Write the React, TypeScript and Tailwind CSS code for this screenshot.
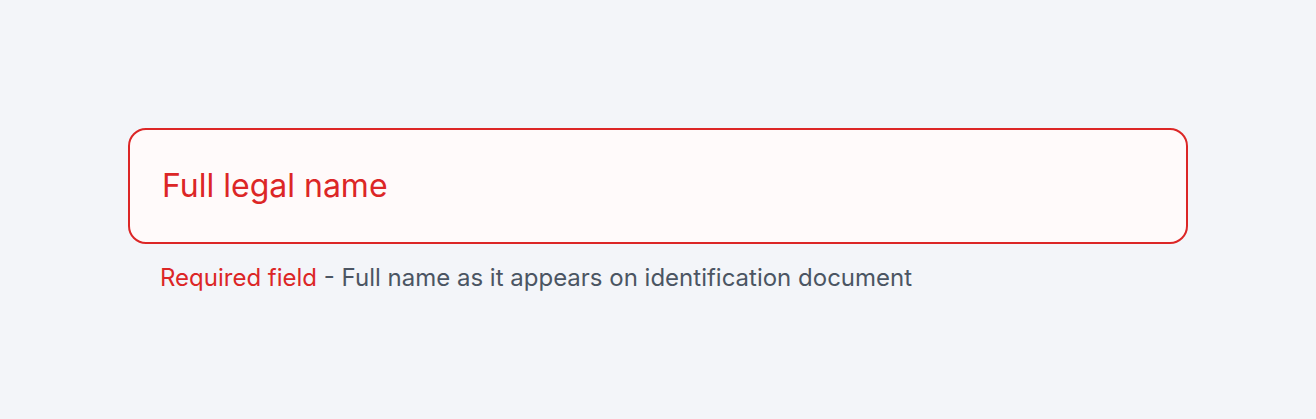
export default function App() {
  return (
    <div
      className="min-h-screen w-full bg-[#f3f5f9] flex items-center justify-center"
      style={{ fontFamily: "Inter, 'Noto Sans', sans-serif" }}
    >
      <div className="w-[1060px] flex flex-col pt-[2px]">
        <div className="h-[116px] rounded-[18px] border-2 border-[#dc2626] bg-[#fffafa] flex items-center pl-[32px]">
          <span className="text-[32px] text-[#dc2626] leading-none">Full legal name</span>
        </div>
        <div className="mt-[18px] pl-[32px] text-[24px] leading-[32px]">
          <span className="text-[#dc2626]">Required field</span>
          <span className="text-[#4b5563]"> - Full name as it appears on identification document</span>
        </div>
      </div>
    </div>
  );
}
